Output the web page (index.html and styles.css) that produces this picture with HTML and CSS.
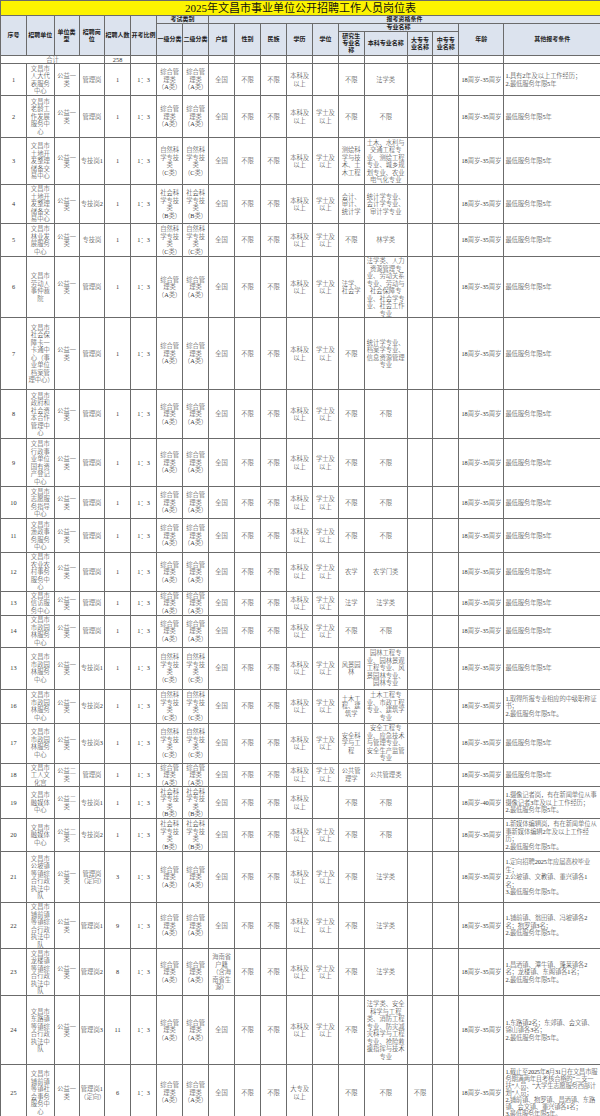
FILE: index.html
```html
<!DOCTYPE html>
<html lang="zh-CN">
<head>
<meta charset="utf-8">
<title>2025年文昌市事业单位公开招聘工作人员岗位表</title>
<link rel="stylesheet" href="styles.css">
</head>
<body>
<table class="sheet">
<colgroup>
<col class="c-no"><col class="c-unit"><col class="c-type"><col class="c-post"><col class="c-num"><col class="c-ratio">
<col class="c-k1"><col class="c-k2"><col class="c-hj"><col class="c-xb"><col class="c-mz"><col class="c-xl"><col class="c-xw">
<col class="c-yjs"><col class="c-bk"><col class="c-dz"><col class="c-zz"><col class="c-age"><col class="c-oth">
</colgroup>
<thead>
<tr class="title"><td colspan="19">2025年文昌市事业单位公开招聘工作人员岗位表</td></tr>
<tr class="ha">
<th rowspan="3">序号</th><th rowspan="3">招聘单位</th><th rowspan="3">单位类型</th><th rowspan="3">招聘岗位</th><th rowspan="3">招聘人数</th><th rowspan="3">开考比例</th>
<th colspan="2">考试类别</th><th colspan="11">报考资格条件</th>
</tr>
<tr class="hb">
<th rowspan="2">一级分类</th><th rowspan="2">二级分类</th><th rowspan="2">户籍</th><th rowspan="2">性别</th><th rowspan="2">民族</th><th rowspan="2">学历</th><th rowspan="2">学位</th>
<th colspan="4">专业名称</th><th rowspan="2">年龄</th><th rowspan="2">其他报考条件</th>
</tr>
<tr class="hc">
<th class="narrow">研究生专业名称</th><th>本科专业名称</th><th class="narrow">大专专业名称</th><th class="narrow">中专专业名称</th>
</tr>
</thead>
<tbody>
<tr class="total"><td colspan="4">合计</td><td>258</td><td></td><td></td><td></td><td></td><td></td><td></td><td></td><td></td><td></td><td></td><td></td><td></td><td></td><td></td></tr>

<tr class="r1"><td>1</td><td class="unit">文昌市人大代表服务中心</td><td>公益一类</td><td>管理岗</td><td>1</td><td>1：3</td><td>综合管理类<span class="nw">（A类）</span></td><td>综合管理类<span class="nw">（A类）</span></td><td>全国</td><td>不限</td><td>不限</td><td>本科及以上</td><td></td><td>不限</td><td class="bk">法学类</td><td></td><td></td><td>18周岁-35周岁</td><td class="oth">1.具有2年及以上工作经历；<br>2.最低服务年限5年</td></tr>

<tr class="r2"><td>2</td><td class="unit">文昌市老龄工作发展服务中心</td><td>公益一类</td><td>管理岗</td><td>1</td><td>1：3</td><td>综合管理类<span class="nw">（A类）</span></td><td>综合管理类<span class="nw">（A类）</span></td><td>全国</td><td>不限</td><td>不限</td><td>本科及以上</td><td>学士及以上</td><td>不限</td><td class="bk">不限</td><td></td><td></td><td>18周岁-35周岁</td><td class="oth">最低服务年限5年</td></tr>

<tr class="r3"><td>3</td><td class="unit">文昌市土地开发整理储备交易中心</td><td>公益一类</td><td>专技岗1</td><td>1</td><td>1：3</td><td>自然科学专技类<span class="nw">（C类）</span></td><td>自然科学专技类<span class="nw">（C类）</span></td><td>全国</td><td>不限</td><td>不限</td><td>本科及以上</td><td>学士及以上</td><td>测绘科学与技术、土木工程</td><td class="bk">土木、水利与交通工程专业、测绘工程专业、城乡规划专业、农业电气化专业</td><td></td><td></td><td>18周岁-35周岁</td><td class="oth">最低服务年限5年</td></tr>

<tr class="r4"><td>4</td><td class="unit">文昌市土地开发整理储备交易中心</td><td>公益一类</td><td>专技岗2</td><td>1</td><td>1：3</td><td>社会科学专技类<span class="nw">（B类）</span></td><td>社会科学专技类<span class="nw">（B类）</span></td><td>全国</td><td>不限</td><td>不限</td><td>本科及以上</td><td>学士及以上</td><td>会计、审计、统计学</td><td class="bk">统计学专业、会计学专业、审计学专业</td><td></td><td></td><td>18周岁-35周岁</td><td class="oth">最低服务年限5年</td></tr>

<tr class="r5"><td>5</td><td class="unit">文昌市林业发展服务中心</td><td>公益一类</td><td>专技岗</td><td>1</td><td>1：3</td><td>自然科学专技类<span class="nw">（C类）</span></td><td>自然科学专技类<span class="nw">（C类）</span></td><td>全国</td><td>不限</td><td>不限</td><td>本科及以上</td><td>学士及以上</td><td>不限</td><td class="bk">林学类</td><td></td><td></td><td>18周岁-35周岁</td><td class="oth">最低服务年限5年</td></tr>

<tr class="r6"><td>6</td><td class="unit">文昌市劳动人事仲裁院</td><td>公益一类</td><td>管理岗</td><td>1</td><td>1：3</td><td>综合管理类<span class="nw">（A类）</span></td><td>综合管理类<span class="nw">（A类）</span></td><td>全国</td><td>不限</td><td>不限</td><td>本科及以上</td><td>学士及以上</td><td>法学、社会学</td><td class="bk">法学类、人力资源管理专业、劳动关系专业、劳动与社会保障专业、社会学专业、社会工作专业</td><td></td><td></td><td>18周岁-35周岁</td><td class="oth">最低服务年限5年</td></tr>

<tr class="r7"><td>7</td><td class="unit">文昌市社会保障卡一卡通中心（事业单位档案管理中心）</td><td>公益一类</td><td>管理岗</td><td>1</td><td>1：3</td><td>综合管理类<span class="nw">（A类）</span></td><td>综合管理类<span class="nw">（A类）</span></td><td>全国</td><td>不限</td><td>不限</td><td>本科及以上</td><td>学士及以上</td><td>不限</td><td class="bk">统计学专业、档案学专业、信息资源管理专业</td><td></td><td></td><td>18周岁-35周岁</td><td class="oth">最低服务年限5年</td></tr>

<tr class="r8"><td>8</td><td class="unit">文昌市政府和社会资本合作管理中心</td><td>公益一类</td><td>管理岗</td><td>1</td><td>1：3</td><td>综合管理类<span class="nw">（A类）</span></td><td>综合管理类<span class="nw">（A类）</span></td><td>全国</td><td>不限</td><td>不限</td><td>本科及以上</td><td>学士及以上</td><td>不限</td><td class="bk">不限</td><td></td><td></td><td>18周岁-35周岁</td><td class="oth">最低服务年限5年</td></tr>

<tr class="r9"><td>9</td><td class="unit">文昌市行政事业单位国有资产登记中心</td><td>公益一类</td><td>管理岗</td><td>1</td><td>1：3</td><td>综合管理类<span class="nw">（A类）</span></td><td>综合管理类<span class="nw">（A类）</span></td><td>全国</td><td>不限</td><td>不限</td><td>本科及以上</td><td>学士及以上</td><td>不限</td><td class="bk">不限</td><td></td><td></td><td>18周岁-35周岁</td><td class="oth">最低服务年限5年</td></tr>

<tr class="r10"><td>10</td><td class="unit">文昌市志愿服务指导中心</td><td>公益一类</td><td>管理岗</td><td>1</td><td>1：3</td><td>综合管理类<span class="nw">（A类）</span></td><td>综合管理类<span class="nw">（A类）</span></td><td>全国</td><td>不限</td><td>不限</td><td>本科及以上</td><td>学士及以上</td><td>不限</td><td class="bk">不限</td><td></td><td></td><td>18周岁-35周岁</td><td class="oth">最低服务年限5年</td></tr>

<tr class="r11"><td>11</td><td class="unit">文昌市渔政事务服务中心</td><td>公益一类</td><td>管理岗</td><td>1</td><td>1：3</td><td>综合管理类<span class="nw">（A类）</span></td><td>综合管理类<span class="nw">（A类）</span></td><td>全国</td><td>不限</td><td>不限</td><td>本科及以上</td><td>学士及以上</td><td>不限</td><td class="bk">不限</td><td></td><td></td><td>18周岁-35周岁</td><td class="oth">最低服务年限5年</td></tr>

<tr class="r12"><td>12</td><td class="unit">文昌市农业农村事务服务中心</td><td>公益一类</td><td>管理岗</td><td>1</td><td>1：3</td><td>综合管理类<span class="nw">（A类）</span></td><td>综合管理类<span class="nw">（A类）</span></td><td>全国</td><td>不限</td><td>不限</td><td>本科及以上</td><td>学士及以上</td><td>农学</td><td class="bk">农学门类</td><td></td><td></td><td>18周岁-35周岁</td><td class="oth">最低服务年限5年</td></tr>

<tr class="r13"><td>13</td><td class="unit">文昌市信访服务中心</td><td>公益一类</td><td>管理岗</td><td>1</td><td>1：3</td><td>综合管理类<span class="nw">（A类）</span></td><td>综合管理类<span class="nw">（A类）</span></td><td>全国</td><td>不限</td><td>不限</td><td>本科及以上</td><td>学士及以上</td><td>法学</td><td class="bk">法学类</td><td></td><td></td><td>18周岁-35周岁</td><td class="oth">最低服务年限5年</td></tr>

<tr class="r14"><td>14</td><td class="unit">文昌市市政园林服务中心</td><td>公益一类</td><td>管理岗</td><td>1</td><td>1：3</td><td>综合管理类<span class="nw">（A类）</span></td><td>综合管理类<span class="nw">（A类）</span></td><td>全国</td><td>不限</td><td>不限</td><td>本科及以上</td><td>学士及以上</td><td>不限</td><td class="bk">不限</td><td></td><td></td><td>18周岁-35周岁</td><td class="oth">最低服务年限5年</td></tr>

<tr class="r15"><td>13</td><td class="unit">文昌市市政园林服务中心</td><td>公益一类</td><td>专技岗1</td><td>1</td><td>1：3</td><td>自然科学专技类<span class="nw">（C类）</span></td><td>自然科学专技类<span class="nw">（C类）</span></td><td>全国</td><td>不限</td><td>不限</td><td>本科及以上</td><td>学士及以上</td><td>风景园林</td><td class="bk">园林工程专业、园林景观工程专业、风景园林专业、园林专业</td><td></td><td></td><td>18周岁-35周岁</td><td class="oth">最低服务年限5年</td></tr>

<tr class="r16"><td>16</td><td class="unit">文昌市市政园林服务中心</td><td>公益一类</td><td>专技岗2</td><td>1</td><td>1：3</td><td>自然科学专技类<span class="nw">（C类）</span></td><td>自然科学专技类<span class="nw">（C类）</span></td><td>全国</td><td>不限</td><td>不限</td><td>本科及以上</td><td>学士及以上</td><td>土木工程、建筑学</td><td class="bk">土木工程专业、市政工程专业、建筑学专业</td><td></td><td></td><td>18周岁-35周岁</td><td class="oth">1.取得所报专业相应的中级职称证书；<br>2.最低服务年限5年。</td></tr>

<tr class="r17"><td>17</td><td class="unit">文昌市市政园林服务中心</td><td>公益一类</td><td>专技岗3</td><td>1</td><td>1：3</td><td>自然科学专技类<span class="nw">（C类）</span></td><td>自然科学专技类<span class="nw">（C类）</span></td><td>全国</td><td>不限</td><td>不限</td><td>本科及以上</td><td>学士及以上</td><td>安全科学与工程</td><td class="bk">安全工程专业、应急技术与管理专业、安全生产监管专业</td><td></td><td></td><td>18周岁-35周岁</td><td class="oth">最低服务年限5年</td></tr>

<tr class="r18"><td>18</td><td class="unit">文昌市工人文化宫</td><td>公益二类</td><td>管理岗</td><td>1</td><td>1：3</td><td>综合管理类<span class="nw">（A类）</span></td><td>综合管理类<span class="nw">（A类）</span></td><td>全国</td><td>不限</td><td>不限</td><td>本科及以上</td><td>学士及以上</td><td>公共管理学</td><td class="bk">公共管理类</td><td></td><td></td><td>18周岁-35周岁</td><td class="oth">最低服务年限5年</td></tr>

<tr class="r19"><td>19</td><td class="unit">文昌市融媒体中心</td><td>公益二类</td><td>专技岗1</td><td>1</td><td>1：3</td><td>社会科学专技类<span class="nw">（B类）</span></td><td>社会科学专技类<span class="nw">（B类）</span></td><td>全国</td><td>不限</td><td>不限</td><td>本科及以上</td><td></td><td>不限</td><td class="bk">不限</td><td></td><td></td><td>18周岁-40周岁</td><td class="oth">1.摄像记者岗，有在新闻单位从事摄像记者3年及以上工作经历；<br>2.最低服务年限5年。</td></tr>

<tr class="r20"><td>20</td><td class="unit">文昌市融媒体中心</td><td>公益二类</td><td>专技岗2</td><td>1</td><td>1：3</td><td>社会科学专技类<span class="nw">（B类）</span></td><td>社会科学专技类<span class="nw">（B类）</span></td><td>全国</td><td>不限</td><td>不限</td><td>本科及以上</td><td>学士及以上</td><td>不限</td><td class="bk">不限</td><td></td><td></td><td>18周岁-35周岁</td><td class="oth">1.新媒体编辑岗，有在新闻单位从事新媒体编辑2年及以上工作经历；<br>2.最低服务年限5年。</td></tr>

<tr class="r21"><td>21</td><td class="unit">文昌市公坡镇等镇综合行政执法中队</td><td>公益一类</td><td>管理岗（定向）</td><td>3</td><td>1：3</td><td>综合管理类<span class="nw">（A类）</span></td><td>综合管理类<span class="nw">（A类）</span></td><td>全国</td><td>不限</td><td>不限</td><td>本科及以上</td><td>学士及以上</td><td>不限</td><td class="bk">法学类</td><td></td><td></td><td>18周岁-35周岁</td><td class="oth">1.定向招聘2025年应届高校毕业生；<br>2.公坡镇、文教镇、重兴镇各1名；<br>3.最低服务年限5年。</td></tr>

<tr class="r22"><td>22</td><td class="unit">文昌市铺前镇等镇综合行政执法中队</td><td>公益一类</td><td>管理岗1</td><td>9</td><td>1：3</td><td>综合管理类<span class="nw">（A类）</span></td><td>综合管理类<span class="nw">（A类）</span></td><td>全国</td><td>不限</td><td>不限</td><td>本科及以上</td><td>学士及以上</td><td>不限</td><td class="bk">法学类</td><td></td><td></td><td>18周岁-35周岁</td><td class="oth">1.铺前镇、翁田镇、冯坡镇各2名；抱罗镇3名；<br>2.最低服务年限5年。</td></tr>

<tr class="r23"><td>23</td><td class="unit">文昌市龙楼镇等镇综合行政执法中队</td><td>公益一类</td><td>管理岗2</td><td>8</td><td>1：3</td><td>综合管理类<span class="nw">（A类）</span></td><td>综合管理类<span class="nw">（A类）</span></td><td>海南省户籍（含海南省生源）</td><td>不限</td><td>不限</td><td>本科及以上</td><td>学士及以上</td><td>不限</td><td class="bk">法学类</td><td></td><td></td><td>18周岁-35周岁</td><td class="oth">1.昌洒镇、潭牛镇、蓬莱镇各2名；龙楼镇、东阁镇各1名；<br>2.最低服务年限5年。</td></tr>

<tr class="r24"><td>24</td><td class="unit">文昌市东路镇等镇综合行政执法中队</td><td>公益一类</td><td>管理岗3</td><td>11</td><td>1：3</td><td>综合管理类<span class="nw">（A类）</span></td><td>综合管理类<span class="nw">（A类）</span></td><td>全国</td><td>不限</td><td>不限</td><td>本科及以上</td><td>学士及以上</td><td>不限</td><td class="bk">法学类、安全科学与工程类、消防工程专业、防灾减灾科学与工程专业、抢险救援指挥与技术专业</td><td></td><td></td><td>18周岁-35周岁</td><td class="oth">1.东路镇2名；东郊镇、会文镇、锦山镇各3名；<br>2.最低服务年限5年。</td></tr>

<tr class="r25"><td>25</td><td class="unit">文昌市铺前镇等镇社会事务服务中心</td><td>公益一类</td><td>管理岗1（定向）</td><td>6</td><td>1：3</td><td>综合管理类<span class="nw">（A类）</span></td><td>综合管理类<span class="nw">（A类）</span></td><td>全国</td><td>不限</td><td>不限</td><td>大专及以上</td><td></td><td>不限</td><td class="bk">不限</td><td>不限</td><td></td><td>18周岁-35周岁</td><td class="oth tight">1.截止至2025年8月31日在文昌市服务期满两年且考核合格的“三支一扶”人员、“大学生志愿服务西部计划”人员；<br>2.铺前镇、抱罗镇、昌洒镇、东路镇、会文镇、重兴镇各1名；<br>3.最低服务年限5年。</td></tr>
</tbody>
</table>
</body>
</html>
```
FILE: styles.css
```css
html, body {
  margin: 0;
  padding: 0;
  background: #ffffff;
}

.sheet {
  width: 600px;
  border-collapse: collapse;
  table-layout: fixed;
  font-family: "Liberation Serif", "Noto Sans CJK SC", serif;
  font-size: 6.3px;
  line-height: 7.5px;
  font-weight: 300;
  color: #333;
}

.c-no { width: 26px; }
.c-unit { width: 27.6px; }
.c-type { width: 25px; }
.c-post { width: 25.5px; }
.c-num { width: 26px; }
.c-ratio { width: 26px; }
.c-k1 { width: 26px; }
.c-k2 { width: 26px; }
.c-hj { width: 26px; }
.c-xb { width: 26px; }
.c-mz { width: 26px; }
.c-xl { width: 26px; }
.c-xw { width: 25.6px; }
.c-yjs { width: 26px; }
.c-bk { width: 43px; }
.c-dz { width: 25.7px; }
.c-zz { width: 26px; }
.c-age { width: 45px; }
.c-oth { width: 96.6px; }

.sheet td,
.sheet th {
  border: 1px solid #6b6b6b;
  padding: 0 0.5px;
  text-align: center;
  vertical-align: middle;
  overflow: hidden;
}

.nw {
  white-space: nowrap;
}

.title td {
  height: 14px;
  background: #fcf300;
  font-size: 11px;
  line-height: 14px;
  font-weight: 400;
  color: #111;
  padding: 0;
}

.sheet th {
  background: #dce3ee;
  font-weight: bold;
  font-size: 6px;
  line-height: 7px;
  color: #1c1c1c;
}

.sheet th.narrow {
  padding: 0 2px;
}

.ha { height: 8px; }
.hb { height: 7px; }
.hc { height: 24px; }

.total td {
  height: 7px;
  line-height: 7px;
}

.sheet td.unit {
  padding: 0 1.5px;
}

.sheet td.bk {
  padding: 0 0.5px;
}

.sheet td.oth {
  text-align: left;
  padding: 0 1px;
  letter-spacing: -0.1px;
}

.sheet td.oth.tight {
  line-height: 7px;
  letter-spacing: -0.2px;
}

.r1 { height: 32px; }
.r2 { height: 42px; }
.r3 { height: 47px; }
.r4 { height: 39px; }
.r5 { height: 33px; }
.r6 { height: 58px; }
.r7 { height: 72px; }
.r8 { height: 49px; }
.r9 { height: 48px; }
.r10 { height: 32px; }
.r11 { height: 34px; }
.r12 { height: 38px; }
.r13 { height: 24px; }
.r14 { height: 32px; }
.r15 { height: 42px; }
.r16 { height: 34px; }
.r17 { height: 40px; }
.r18 { height: 22px; }
.r19 { height: 32px; }
.r20 { height: 33px; }
.r21 { height: 51px; }
.r22 { height: 45px; }
.r23 { height: 47px; }
.r24 { height: 69px; }
.r25 { height: 56px; }
```
